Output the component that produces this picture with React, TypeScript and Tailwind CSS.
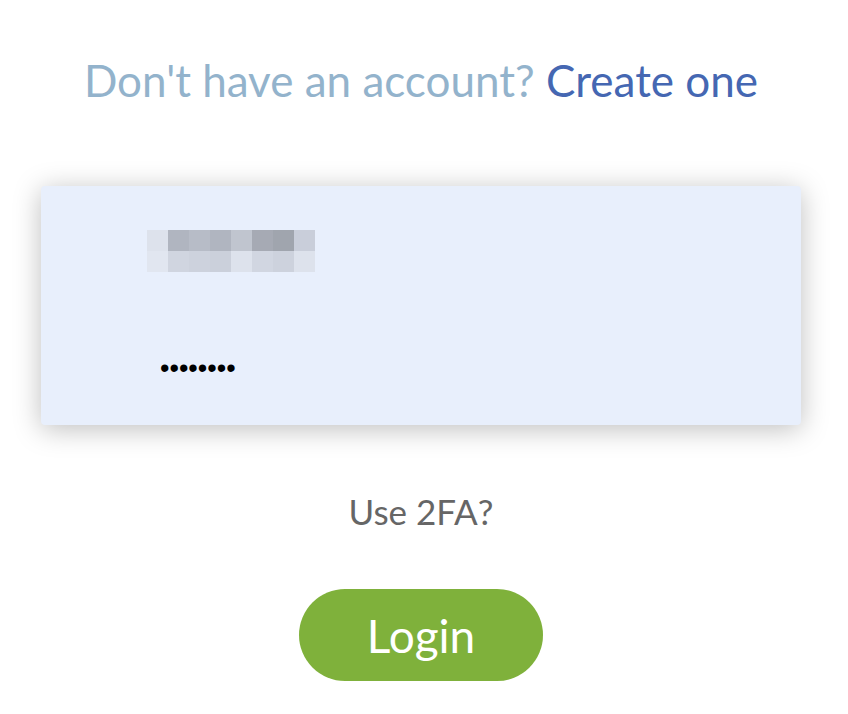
import React from "react";

const pixels = [
  ["#dde2ec", "#b0b5c0", "#b7bcc7", "#b0b5c0", "#c0c5cf", "#a6aab4", "#a0a5ae", "#c9ceda"],
  ["#e1e6f0", "#d0d5e0", "#cdd2dd", "#cbd0db", "#dde2ec", "#d1d6e1", "#cdd2dd", "#dde2ec"],
];

export default function App() {
  return (
    <div className="min-h-[714px] w-[842px] bg-white font-['Lato','Noto_Sans',sans-serif]">
      <div className="flex flex-col items-center pt-[52px]">
        {/* Sign up prompt */}
        <p className="text-[44px] leading-[56px] text-[#93b3cc]">
          Don't have an account? <a className="text-[#4567b2]">Create one</a>
        </p>

        {/* Credentials card */}
        <div className="mt-[78px] flex h-[239px] w-[760px] flex-col rounded-[4px] bg-[#e8effc] pl-[106px] pt-[44px] shadow-[0_4px_28px_rgba(0,0,0,0.26)]">
          {/* Username (blurred) */}
          <div className="flex flex-col">
            {pixels.map((row, i) => (
              <div key={i} className="flex">
                {row.map((c, j) => (
                  <div key={j} className="h-[21px] w-[21px]" style={{ backgroundColor: c }} />
                ))}
              </div>
            ))}
          </div>

          {/* Password */}
          <div className="mt-[84px] pl-[13px] font-['Liberation_Sans',sans-serif] text-[27px] leading-[24px] text-black">
            ••••••••
          </div>
        </div>

        <p className="mt-[66px] text-[35px] leading-[40px] text-[#666666]">Use 2FA?</p>

        <button className="mt-[58px] flex h-[92px] w-[244px] items-center justify-center rounded-full bg-[#7fb13b] text-[46px] text-white">
          Login
        </button>
      </div>
    </div>
  );
}
